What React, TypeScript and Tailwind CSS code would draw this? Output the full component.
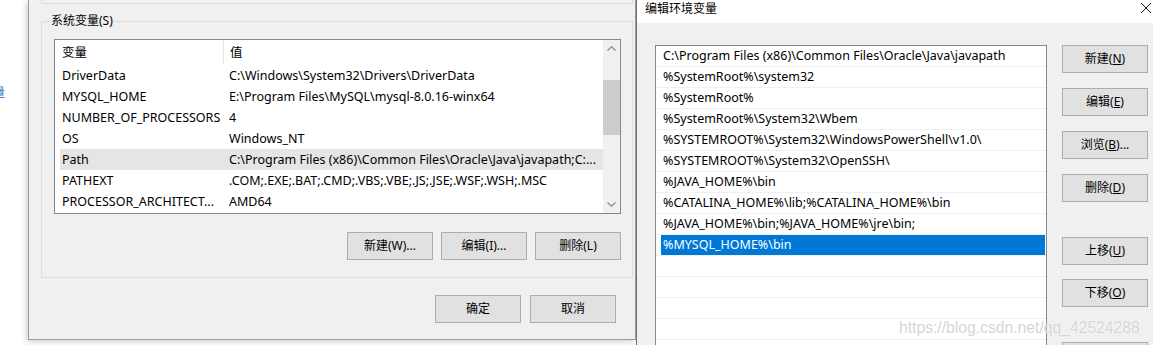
import React from "react";

// --- data ---
const sysVars: [string, string][] = [
  ["DriverData", "C:\\Windows\\System32\\Drivers\\DriverData"],
  ["MYSQL_HOME", "E:\\Program Files\\MySQL\\mysql-8.0.16-winx64"],
  ["NUMBER_OF_PROCESSORS", "4"],
  ["OS", "Windows_NT"],
  ["Path", "C:\\Program Files (x86)\\Common Files\\Oracle\\Java\\javapath;C:..."],
  ["PATHEXT", ".COM;.EXE;.BAT;.CMD;.VBS;.VBE;.JS;.JSE;.WSF;.WSH;.MSC"],
  ["PROCESSOR_ARCHITECT...", "AMD64"],
];

const pathEntries = [
  "C:\\Program Files (x86)\\Common Files\\Oracle\\Java\\javapath",
  "%SystemRoot%\\system32",
  "%SystemRoot%",
  "%SystemRoot%\\System32\\Wbem",
  "%SYSTEMROOT%\\System32\\WindowsPowerShell\\v1.0\\",
  "%SYSTEMROOT%\\System32\\OpenSSH\\",
  "%JAVA_HOME%\\bin",
  "%CATALINA_HOME%\\lib;%CATALINA_HOME%\\bin",
  "%JAVA_HOME%\\bin;%JAVA_HOME%\\jre\\bin;",
  "%MYSQL_HOME%\\bin",
  "",
  "",
  "",
  "",
];

function Btn({ children, className = "" }: { children?: React.ReactNode; className?: string }) {
  return (
    <div
      className={
        "flex h-[28px] w-[86px] shrink-0 items-center justify-center border border-[#adadad] bg-[#e1e1e1] text-[12px] leading-none " +
        className
      }
    >
      {children}
    </div>
  );
}

function Chevron({ down = false }: { down?: boolean }) {
  return (
    <svg width="9" height="5" viewBox="0 0 9 5" className={down ? "rotate-180" : ""}>
      <path d="M0.5 4.5 L4.5 0.8 L8.5 4.5" fill="none" stroke="#8a8a8a" strokeWidth="1.2" />
    </svg>
  );
}

function SystemVarsDialog() {
  return (
    <div className="relative h-[340px] w-[608px] shrink-0 border-b border-l border-r border-[#9a9a9a] bg-[#f0f0f0] shadow-[-2px_2px_6px_rgba(0,0,0,0.18)]">
      {/* bottom of the user variables group above */}
      <div className="ml-[12px] h-[4px] w-[592px] border-x border-b border-[#dcdcdc]" />

      <div className="relative ml-[12px] mt-[17px] w-[592px] border border-[#dcdcdc]">
        <span className="absolute -top-[9px] left-[8px] bg-[#f0f0f0] px-[1px] text-[12px] leading-[16px]">
          系统变量(S)
        </span>

        <div className="ml-[12px] mt-[17px] flex h-[175px] w-[567px] border border-[#828790] bg-white text-[12.5px]">
          <div className="flex-1">
            <div className="flex h-[25px] items-center">
              <div className="flex h-full w-[169px] items-center border-r border-[#e5e5e5] pl-[7px] pt-[1px]">变量</div>
              <div className="pl-[6px] pt-[1px]">值</div>
            </div>
            {sysVars.map(([name, value]) => (
              <div
                key={name}
                className={
                  "ml-[5px] flex h-[21px] items-center whitespace-nowrap pt-[1px] " +
                  (name === "Path" ? "bg-[#e5e5e5]" : "")
                }
              >
                <div className="w-[163px] pl-[2px]">{name}</div>
                <div className="pl-[6px]">{value}</div>
              </div>
            ))}
          </div>
          <div className="flex w-[17px] flex-col bg-[#f0f0f0]">
            <div className="flex h-[17px] items-center justify-center">
              <Chevron />
            </div>
            <div className="mt-[23px] h-[55px] bg-[#cdcdcd]" />
            <div className="flex-1" />
            <div className="flex h-[17px] items-center justify-center">
              <Chevron down />
            </div>
          </div>
        </div>

        <div className="mt-[18px] flex justify-end gap-[8px] pb-[17px] pr-[11px]">
          <Btn>新建(W)...</Btn>
          <Btn>编辑(I)...</Btn>
          <Btn>删除(L)</Btn>
        </div>
      </div>

      <div className="mt-[17px] flex justify-end gap-[9px] pr-[19px]">
        <Btn>确定</Btn>
        <Btn>取消</Btn>
      </div>
    </div>
  );
}

function EditPathDialog() {
  return (
    <div className="relative flex h-[345px] w-[517px] shrink-0 flex-col border-l border-[#707070] bg-[#f0f0f0]">
      <div className="flex h-[23px] shrink-0 items-start justify-between bg-white pl-[8px]">
        <span className="pt-[1px] text-[12px] leading-[16px]">编辑环境变量</span>
        <svg width="12" height="12" viewBox="0 0 12 12" className="mr-[1px] mt-[2px]">
          <path d="M1 1 L11 11 M11 1 L1 11" stroke="#111" strokeWidth="1" />
        </svg>
      </div>

      <div className="mt-[22px] flex pl-[18px]">
        <div className="w-[392px] border-l border-r border-t border-[#828790] bg-white text-[12.5px]">
          {pathEntries.map((entry, i) => (
            <div key={i} className="h-[21px] border-b border-[#f0f0f0]">
              <div
                className={
                  "ml-[5px] mr-[1px] flex h-full items-center whitespace-nowrap pl-[2px] pt-[1px] " +
                  (i === 9 ? "bg-[#0078d7] text-white" : "")
                }
              >
                {entry}
              </div>
            </div>
          ))}
        </div>

        <div className="ml-[15px] flex flex-col">
          <Btn>
            新建(<u>N</u>)
          </Btn>
          <Btn className="mt-[15px]">
            编辑(<u>E</u>)
          </Btn>
          <Btn className="mt-[15px]">
            浏览(<u>B</u>)...
          </Btn>
          <Btn className="mt-[15px]">
            删除(<u>D</u>)
          </Btn>
          <Btn className="mt-[35px]">
            上移(<u>U</u>)
          </Btn>
          <Btn className="mt-[14px]">
            下移(<u>O</u>)
          </Btn>
          <Btn className="mt-[35px]" />
        </div>
      </div>

      {/* blog watermark */}
      <span className="pointer-events-none absolute left-[262px] top-[316px] font-['Liberation_Sans',sans-serif] text-[15.7px] text-[#d6d6d6] [text-shadow:0_0_2px_#fff]">
        https://blog.csdn.net/qq_42524288
      </span>
    </div>
  );
}

export default function App() {
  return (
    <div className="flex h-[345px] w-[1153px] overflow-hidden bg-white font-['Noto_Sans','Noto_Sans_CJK_SC',sans-serif] text-black">
      <div className="w-[28px] shrink-0">
        <div className="mt-[85px] w-[6px] overflow-hidden text-[12px] leading-[16px] text-[#1e6ec8]">
          <span className="-ml-[7px] block">量</span>
        </div>
      </div>
      <SystemVarsDialog />
      <EditPathDialog />
    </div>
  );
}
